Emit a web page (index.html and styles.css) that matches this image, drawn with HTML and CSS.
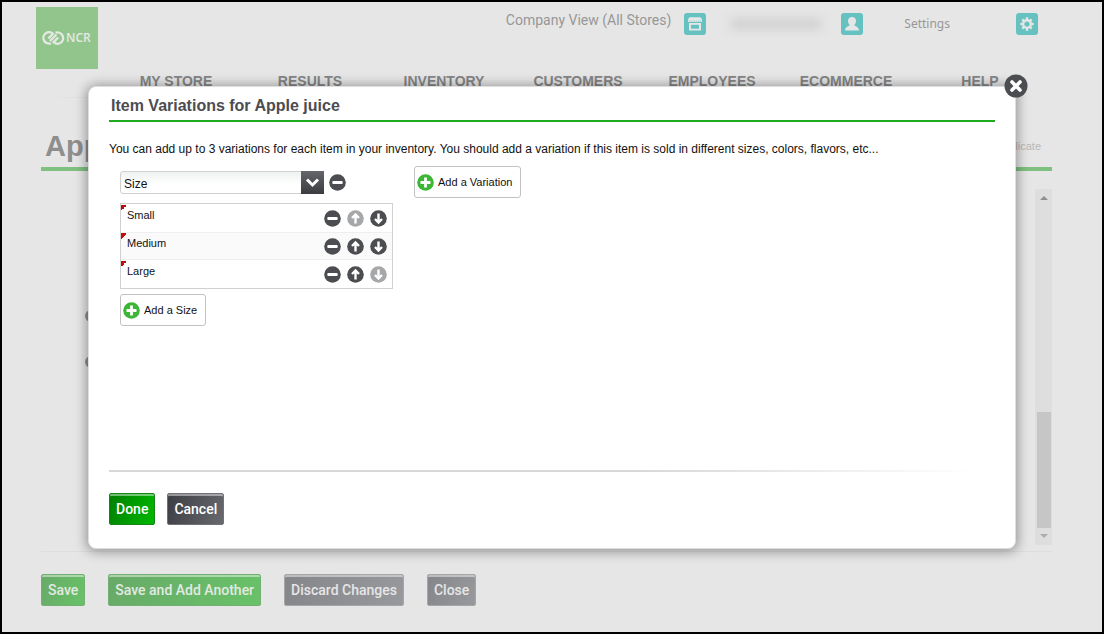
FILE: index.html
```html
<!DOCTYPE html>
<html lang="en">
<head>
<meta charset="utf-8">
<title>Item Variations</title>
<link rel="stylesheet" href="styles.css">
</head>
<body>
<svg class="sprite" aria-hidden="true">
  <symbol id="minus" viewBox="0 0 17 17"><circle cx="8.500" cy="8.500" r="8.300" fill="#4c4d51"/><rect x="3.300" y="7" width="10.400" height="3" rx="1" fill="#fff"/></symbol>
  <symbol id="up" viewBox="0 0 17 17"><circle cx="8.500" cy="8.500" r="8.300" fill="currentColor"/><path d="M8.500 13.400V5M5 8l3.500-3.500L12 8" fill="none" stroke="#fff" stroke-width="2.400"/></symbol>
  <symbol id="down" viewBox="0 0 17 17"><circle cx="8.500" cy="8.500" r="8.300" fill="currentColor"/><path d="M8.500 3.600V12M5 9l3.500 3.500L12 9" fill="none" stroke="#fff" stroke-width="2.400"/></symbol>
  <symbol id="plus" viewBox="0 0 17 17"><circle cx="8.500" cy="8.500" r="8.300" fill="#3cb635"/><path d="M8.500 3.500v10M3.500 8.500h10" stroke="#fff" stroke-width="2.800"/></symbol>
</svg>

<div class="page">
  <header class="top">
    <a class="logo" href="#" aria-label="NCR">
      <svg viewBox="0 0 62 62" width="62" height="62">
        <rect width="62" height="62" fill="#92c58c"/>
        <g fill="none" stroke="#e4e9e3" stroke-width="2.300">
          <path d="M15 36.300a5.700 5.700 0 1 1 2-9.500L12.300 31.500"/>
          <path d="M19.500 25.700a5.700 5.700 0 1 1-2 9.500L22.200 30.500"/>
          <path d="M14 34l6.500-6.500"/>
        </g>
        <text class="logo-text" x="30" y="35">NCR</text>
      </svg>
    </a>
    <div class="account">
      <span class="company">Company View (All Stores)</span>
      <button class="tile" aria-label="Stores">
        <svg viewBox="0 0 22 22" width="22" height="22"><path d="M6.500 4.300h9c1.600 0 2.500 1.400 2.500 3.500H4c0-2.100.9-3.500 2.500-3.500z" fill="#e6e6e6"/><path d="M4 8.300h14" stroke="#e6e6e6" stroke-width="1.400" stroke-dasharray="1.600 .5"/><path d="M5 10h12v7.500H5z" fill="#e6e6e6"/><path d="M7 11.800h8v3.900H7z" fill="#66c1c1"/></svg>
      </button>
      <span class="user-name"></span>
      <button class="tile" aria-label="Account">
        <svg viewBox="0 0 22 22" width="22" height="22"><path d="M11 4c2.500 0 4 1.600 4 4 0 1.800-.8 3.200-1.800 4 .3 1.200 4.800 1.500 4.800 5.600H4c0-4.100 4.500-4.400 4.800-5.600C7.800 11.200 7 9.800 7 8c0-2.400 1.500-4 4-4z" fill="#e6e6e6"/></svg>
      </button>
      <span class="settings">Settings</span>
      <button class="tile" aria-label="Settings">
        <svg viewBox="0 0 22 22" width="22" height="22"><g stroke="#e6e6e6" fill="none"><circle cx="11" cy="11" r="3.800" stroke-width="2.400"/><path d="M11 4.300v2.500M11 15.200v2.500M4.300 11h2.500M15.200 11h2.500M6.300 6.300L8 8M14 14l1.700 1.700M6.300 15.700L8 14M14 8l1.700-1.700" stroke-width="2.400"/></g></svg>
      </button>
    </div>
  </header>
  <nav class="nav">
    <a href="#">MY STORE</a><a href="#">RESULTS</a><a href="#">INVENTORY</a><a href="#">CUSTOMERS</a><a href="#">EMPLOYEES</a><a href="#">ECOMMERCE</a><a href="#">HELP</a>
  </nav>
  <div class="title-bar">
    <h1>App</h1>
    <a class="duplicate" href="#">Duplicate</a>
  </div>
  <main class="content">
    <div class="toggles">
      <button class="toggle" aria-label="Toggle section"></button>
      <button class="toggle" aria-label="Toggle section"></button>
    </div>
    <div class="scrollbar" aria-hidden="true">
      <svg width="8" height="4" viewBox="0 0 8 4"><path d="M0 4L4 0l4 4z" fill="#8e8e8e"/></svg>
      <span class="thumb"></span>
      <svg width="8" height="4" viewBox="0 0 8 4"><path d="M0 0l4 4 4-4z" fill="#adadad"/></svg>
    </div>
  </main>
  <footer class="page-actions">
    <button class="btn pale-green">Save</button>
    <button class="btn pale-green">Save and Add Another</button>
    <button class="btn pale-gray">Discard Changes</button>
    <button class="btn pale-gray">Close</button>
  </footer>
</div>

<div class="overlay">
  <section class="modal" role="dialog" aria-labelledby="dialog-title">
    <button class="close" aria-label="Close dialog">
      <svg viewBox="0 0 24 24" width="24" height="24"><circle cx="12" cy="12" r="11.500" fill="#4c4d51"/><path d="M8 8l8 8M16 8l-8 8" stroke="#fff" stroke-width="3.600" stroke-linecap="round"/></svg>
    </button>
    <h2 id="dialog-title">Item Variations for Apple juice</h2>
    <p class="intro">You can add up to 3 variations for each item in your inventory. You should add a variation if this item is sold in different sizes, colors, flavors, etc...</p>
    <div class="variations">
      <div class="variation">
        <div class="picker">
          <div class="combo">
            <select aria-label="Variation type"><option>Size</option></select>
            <span class="combo-arrow"><svg viewBox="0 0 23 23" width="23" height="23"><path d="M6 8.500l5.500 5.500L17 8.500" fill="none" stroke="#fff" stroke-width="3"/></svg></span>
          </div>
          <button class="round" aria-label="Remove variation"><svg><use href="#minus"/></svg></button>
        </div>
        <ul class="values">
          <li><span class="value">Small</span><button class="round" aria-label="Remove Small"><svg><use href="#minus"/></svg></button><button class="round" disabled aria-label="Move Small up"><svg><use href="#up"/></svg></button><button class="round" aria-label="Move Small down"><svg><use href="#down"/></svg></button></li>
          <li><span class="value">Medium</span><button class="round" aria-label="Remove Medium"><svg><use href="#minus"/></svg></button><button class="round" aria-label="Move Medium up"><svg><use href="#up"/></svg></button><button class="round" aria-label="Move Medium down"><svg><use href="#down"/></svg></button></li>
          <li><span class="value">Large</span><button class="round" aria-label="Remove Large"><svg><use href="#minus"/></svg></button><button class="round" aria-label="Move Large up"><svg><use href="#up"/></svg></button><button class="round" disabled aria-label="Move Large down"><svg><use href="#down"/></svg></button></li>
        </ul>
        <button class="add"><svg><use href="#plus"/></svg>Add a Size</button>
      </div>
      <button class="add"><svg><use href="#plus"/></svg>Add a Variation</button>
    </div>
    <div class="modal-actions">
      <button class="btn green">Done</button>
      <button class="btn gray">Cancel</button>
    </div>
  </section>
</div>
</body>
</html>
```
FILE: styles.css
```css
* { box-sizing: border-box; }
body { margin: 0; font-family: "Liberation Sans", Arial, sans-serif; font-size: 12px; color: #111; }
button { font: inherit; color: inherit; background: none; border: 0; padding: 0; cursor: pointer; }
h1, h2, p, ul { margin: 0; padding: 0; }
a { color: inherit; text-decoration: none; }
svg { display: block; flex: none; }
.sprite { position: absolute; width: 0; height: 0; }

/* Page behind the dialog */
.page { display: flex; flex-direction: column; min-height: 100vh; border: 2px solid #000; background: #e6e6e6; padding: 5px 50px 26px 39px; }
.top { display: flex; justify-content: space-between; align-items: flex-start; margin: 0 14px 0 -5px; }
.logo-text { font: 600 12px "Open Sans", sans-serif; fill: #e4e9e3; }
.account { display: flex; align-items: center; padding-top: 5px; color: #979797; }
.company { font: 14px Roboto, sans-serif; padding-bottom: 7px; margin-right: 13px; }
.settings { font: 12px "Noto Sans", sans-serif; margin: 0 66px 0 41px; }
.tile { width: 22px; height: 22px; border-radius: 3px; background: #66c1c1; }
.user-name { width: 92px; height: 12px; margin: 0 19px 0 24px; background: #d3d3d3; filter: blur(5px); }
.nav { display: grid; grid-template-columns: repeat(7, 1fr); margin: 4px 5px 0 0; padding: 0 0 8px 68px; text-align: center; font-weight: bold; font-size: 14px; line-height: 16px; color: #858585; border-bottom: 1px solid; border-image: linear-gradient(90deg, #e6e6e6, #d9d9d9 8%, #d9d9d9 92%, #e6e6e6) 1; }
.title-bar { display: flex; justify-content: space-between; align-items: center; height: 73px; padding: 26px 11px 0 4px; border-bottom: 4px solid #7fbf7f; }
h1 { font-size: 29px; line-height: 32px; color: #8e8e8e; }
.duplicate { color: #b8b8b8; font-size: 11px; }
.content { display: flex; justify-content: space-between; flex: 1; margin-top: 18px; padding-bottom: 6px; border-bottom: 1px solid #dedede; }
.toggles { display: flex; flex-direction: column; gap: 34px; padding: 121px 0 0 44px; }
.toggle { width: 12px; height: 12px; border-radius: 50%; border: 3px solid #909090; }
.scrollbar { display: flex; flex-direction: column; align-items: center; width: 17px; padding: 7px 0; background: #dedede; }
.thumb { width: 14px; height: 34%; margin: auto 0 6px; background: #c6c6c6; }
.page-actions { display: flex; gap: 23px; margin-top: 22px; }

.btn { height: 32px; padding: 0 6px; font: 500 14px/16px Roboto, sans-serif; color: #fff; border: 1px solid; border-radius: 2px; box-shadow: inset 0 2px 0 rgba(255, 255, 255, .45); }
.green { background: linear-gradient(110deg, #008000, #00b800); border-color: #168516; }
.gray { background: linear-gradient(110deg, #3d3e43, #68696f); border-color: #717278; }
.pale-green { background: linear-gradient(110deg, #68aa68, #68c268); border-color: #73ae73; color: #e3e9e3; }
.pale-gray { background: linear-gradient(110deg, #858689, #98999c); border-color: #a5a6a8; color: #e6e6e6; }

/* Dialog */
.overlay { position: absolute; inset: 0; display: flex; padding: 86px 88px 85px; }
.modal { position: relative; flex: 1; display: flex; flex-direction: column; padding: 8px 20px 23px; background: #fff; border: 1px solid #dedede; border-radius: 8px; box-shadow: 0 1px 12px 2px rgba(0, 0, 0, .35); }
.close { position: absolute; top: -13px; right: -13px; }
h2 { font-size: 16px; line-height: 22px; padding: 0 2px 3px; color: #4c4d51; border-bottom: 2px solid #1fab1f; }
.intro { margin: 20px 0 10px; line-height: 14px; }
.variations { display: flex; flex: 1; align-items: flex-start; gap: 21px; padding-left: 11px; }
.variation { width: 273px; padding-top: 5px; }
.picker { display: flex; align-items: center; gap: 5px; }
.combo { display: grid; grid-template-columns: 1fr 23px; width: 204px; height: 23px; }
.combo select { grid-area: 1 / 1 / 2 / 3; appearance: none; font: inherit; color: inherit; padding: 2px 24px 0 3px; border: 1px solid #d0d0d0; border-radius: 3px; background: linear-gradient(#eff2f1, #fff 60%); }
.combo-arrow { grid-area: 1 / 2; z-index: 1; pointer-events: none; background: linear-gradient(#65666b, #3b3c40); }
.round { width: 17px; height: 17px; color: #4c4d51; }
.round:disabled { color: #a6a7a9; }
.round svg, .add svg { width: 17px; height: 17px; }
.values { list-style: none; margin: 9px 0 5px; border: 1px solid #d0d0d0; font-size: 11px; }
.values li { position: relative; display: flex; align-items: center; gap: 6px; height: 28px; padding: 0 5px 0 6px; }
.values li:nth-child(even) { background: #fafafa; box-shadow: inset 0 1px #efefef, inset 0 -1px #efefef; }
.values li::before { content: ""; position: absolute; top: 1px; left: 0; width: 6px; height: 6px; background: linear-gradient(135deg, #c00c0c 50%, transparent 50%); }
.value { flex: 1; padding-bottom: 7px; }
.add { display: flex; align-items: center; gap: 4px; height: 32px; padding: 0 8px 0 2px; border: 1px solid #c2c2c2; border-radius: 3px; background: #fff; font-size: 11px; }
.modal-actions { display: flex; gap: 12px; padding-top: 23px; background: linear-gradient(90deg, #d8d8d8 60%, #fff 98%) top left / 100% 2px no-repeat; }
```
